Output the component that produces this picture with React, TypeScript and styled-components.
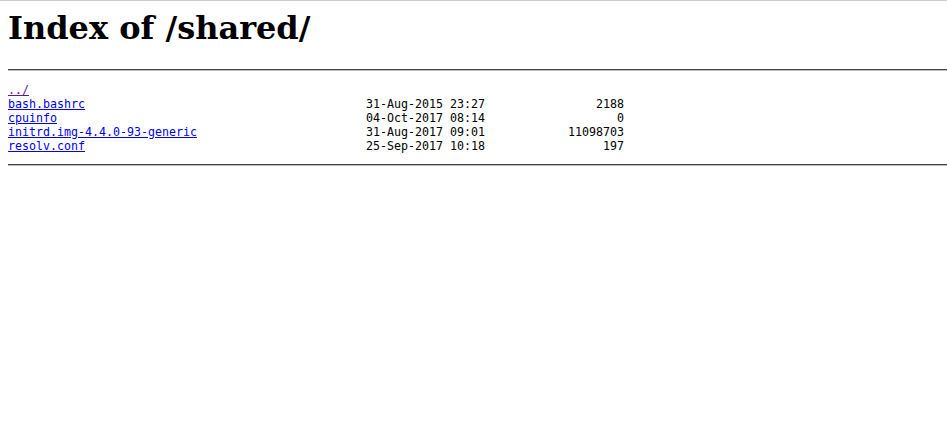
import { Fragment } from "react";
import styled, { createGlobalStyle } from "styled-components";

const GlobalStyle = createGlobalStyle`
  html {
    border-top: 1px solid #cccccc;
  }
  body {
    margin: 0;
    background: #fff;
    color: #000;
  }
`;

const Page = styled.div`
  padding: 0 0 0 8px;
`;

const Title = styled.h1`
  font-family: "DejaVu Serif", serif;
  font-weight: bold;
  font-size: 32px;
  margin: 8px 0 22px 0;
`;

const Rule = styled.hr`
  margin: 0;
  border: none;
  border-top: 1px solid #444;
  border-bottom: 1px solid #bbb;
  height: 0;
`;

const Listing = styled.pre`
  font-family: "DejaVu Sans Mono", monospace;
  font-size: 11.63px;
  line-height: 14px;
  margin: 12px 0 11px 0;
  display: grid;
  grid-template-columns: 358px 119px 139px;
`;

const Cell = styled.span<{ $right?: boolean }>`
  white-space: pre;
  text-align: ${(p) => (p.$right ? "right" : "left")};
`;

const Name = styled.a<{ $visited?: boolean }>`
  color: ${(p) => (p.$visited ? "#551a8b" : "#0000ee")};
  text-decoration: underline;
`;

type Entry = { name: string; date: string; size: string };

const entries: Entry[] = [
  { name: "bash.bashrc", date: "31-Aug-2015 23:27", size: "2188" },
  { name: "cpuinfo", date: "04-Oct-2017 08:14", size: "0" },
  { name: "initrd.img-4.4.0-93-generic", date: "31-Aug-2017 09:01", size: "11098703" },
  { name: "resolv.conf", date: "25-Sep-2017 10:18", size: "197" },
];

export default function App() {
  return (
    <>
      <GlobalStyle />
      <Page>
        <Title>Index of /shared/</Title>
        <Rule />
        <Listing>
          <Cell>
            <Name href="#" $visited>
              ../
            </Name>
          </Cell>
          <Cell />
          <Cell />
          {entries.map((e) => (
            <Fragment key={e.name}>
              <Cell>
                <Name href="#">{e.name}</Name>
              </Cell>
              <Cell>{e.date}</Cell>
              <Cell $right>{e.size}</Cell>
            </Fragment>
          ))}
        </Listing>
        <Rule />
      </Page>
    </>
  );
}
